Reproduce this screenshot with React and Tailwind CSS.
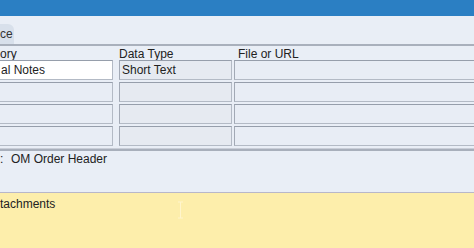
import React from 'react';

const Field = ({ className = '', children }) => (
  <div
    className={`h-[20px] border border-[#b3bac5] border-t-[#969eab] border-l-[#a2a9b5] flex items-center px-[2px] text-[12px] text-[#222] ${className}`}
  >
    {children}
  </div>
);

const rows = [
  { cat: 'al Notes', type: 'Short Text', url: '' },
  { cat: '', type: '', url: '' },
  { cat: '', type: '', url: '' },
  { cat: '', type: '', url: '' },
];

const App = () => {
  return (
    <div
      className="w-[474px] h-[248px] overflow-hidden bg-[#e9eef6] text-[#222] text-[12px] flex flex-col"
      style={{ fontFamily: '"Liberation Sans", Arial, sans-serif' }}
    >
      <div className="h-[16px] bg-[#2b7fc3] shrink-0" />

      <div className="pt-[8px] shrink-0">
        <div className="h-[20px] w-[14px] bg-[#d8e0eb] rounded-tr-[6px] flex items-center text-[12px] text-[#333] leading-none">
          ce
        </div>
      </div>
      <div className="h-[2px] bg-[#a9b0bc] shrink-0" />

      <div className="h-[14px] flex items-end leading-none text-[12px] shrink-0">
        <div className="w-[119px]">ory</div>
        <div className="w-[119px]">Data Type</div>
        <div>File or URL</div>
      </div>

      <div className="flex flex-col gap-[2px] shrink-0">
        {rows.map((r, i) => (
          <div key={i} className="flex">
            <Field className={`w-[114px] -ml-[1px] pl-[1px] ${i === 0 ? 'bg-white' : 'bg-[#e8edf5]'}`}>
              {r.cat}
            </Field>
            <Field className="w-[113px] ml-[6px] bg-[#e6eaf1]">{r.type}</Field>
            <Field className="flex-1 ml-[2px] -mr-[2px] bg-[#e8edf5]">{r.url}</Field>
          </div>
        ))}
      </div>

      <div className="mt-[2px] h-[1px] bg-[#c9ced8] shrink-0" />
      <div className="h-[2px] bg-[#a8afbb] shrink-0" />

      <div className="h-[41px] pt-[2px] flex items-start leading-none shrink-0">
        <span className="w-[11px]">:</span>
        <span>OM Order Header</span>
      </div>

      <div className="h-[1px] bg-[#b8b7c9] shrink-0" />
      <div className="flex-1 bg-[#fdeeab] relative">
        <div className="pt-[5px] leading-none text-[12px]">tachments</div>
        <svg
          className="absolute left-[177px] top-[8px]"
          width="7"
          height="18"
          viewBox="0 0 7 18"
        >
          <path d="M1 1h5M3.5 1v16M1 17h5" stroke="#fff5cc" strokeWidth="1" fill="none" />
        </svg>
      </div>
    </div>
  );
};

export default App;
